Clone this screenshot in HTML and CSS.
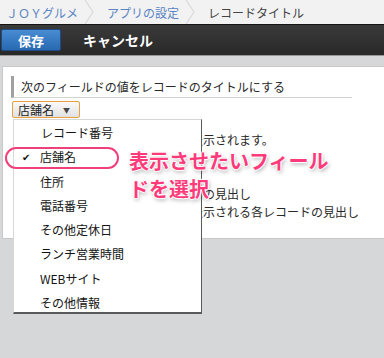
FILE: index.html
```html
<!DOCTYPE html>
<html lang="ja">

<head>
    <meta charset="UTF-8">
    <title>レコードタイトル</title>
    <link rel="stylesheet" href="styles.css">
</head>

<body>
    <nav class="crumbs">
        <a class="crumb link">ＪＯＹグルメ</a>
        <svg class="sep" width="14" height="24" viewBox="0 0 14 24"><path d="M2 0 L10 12 L2 24" fill="none" stroke="#d9d9d9" stroke-width="1.2"/></svg>
        <a class="crumb link">アプリの設定</a>
        <svg class="sep" width="14" height="24" viewBox="0 0 14 24"><path d="M2 0 L10 12 L2 24" fill="none" stroke="#d9d9d9" stroke-width="1.2"/></svg>
        <span class="crumb">レコードタイトル</span>
    </nav>

    <div class="toolbar">
        <button class="btn-save">保存</button>
        <button class="btn-cancel">キャンセル</button>
    </div>

    <main class="stage">
        <section class="panel">
            <h2 class="field-title">次のフィールドの値をレコードのタイトルにする</h2>
            <div class="picker">
                <div class="select">店舗名 <span class="caret">▼</span></div>
                <ul class="menu">
                    <li>レコード番号</li>
                    <li class="checked">店舗名</li>
                    <li>住所</li>
                    <li>電話番号</li>
                    <li>その他定休日</li>
                    <li>ランチ営業時間</li>
                    <li>WEBサイト</li>
                    <li>その他情報</li>
                </ul>
            </div>
            <div class="notes">
                <p class="line-1">タイトルは各レコードの上部に表示されます。</p>
                <p class="line-2">ブラウザのタブに表示される画面の見出し</p>
                <p class="line-3">レコード一覧やスレッドなどに表示される各レコードの見出し</p>
            </div>
        </section>

        <!-- annotation -->
        <div class="ring"></div>
        <p class="callout">表示させたいフィール<br>ドを選択</p>
    </main>
</body>

</html>
```

FILE: styles.css
```css
body {
    margin: 0;
    font-family: "Noto Sans CJK JP", "Noto Sans", sans-serif;
    font-size: 12px;
    color: rgb(51, 51, 51);
    background: rgb(214, 215, 217);
    width: 384px;
    height: 358px;
    overflow: hidden;
}

.crumbs {
    height: 24px;
    display: flex;
    align-items: center;
    background: rgb(242, 242, 242);
    padding-left: 6px;
    white-space: nowrap;
}

.crumb {
    font-size: 12px;
    color: rgb(68, 68, 68);
}

.crumb.link {
    color: rgb(90, 132, 196);
}

.sep {
    margin: 0 10px 0 5px;
}

.toolbar {
    height: 30px;
    display: flex;
    align-items: center;
    gap: 22px;
    background: linear-gradient(rgb(58, 58, 58), rgb(40, 40, 40));
    border-top: 1px solid rgb(20, 20, 20);
    border-bottom: 1px solid rgb(150, 150, 150);
    padding-left: 1px;
}

.toolbar button {
    font-family: inherit;
    font-weight: bold;
    cursor: pointer;
}

.btn-save {
    width: 60px;
    height: 22px;
    font-size: 13px;
    color: rgb(255, 255, 255);
    background: linear-gradient(rgb(72, 140, 210), rgb(40, 105, 178));
    border: 1px solid rgb(30, 75, 135);
    border-radius: 2px;
    padding: 0;
}

.btn-cancel {
    font-size: 14px;
    color: rgb(255, 255, 255);
    background: none;
    border: none;
    padding: 0;
}

.stage {
    position: relative;
    padding: 10px 0 0 2px;
}

.panel {
    background: rgb(255, 255, 255);
    border: 1px solid rgb(200, 200, 200);
    border-right: none;
    padding: 9px 0 0 8px;
    box-sizing: border-box;
    height: 173px;
}

.field-title {
    width: 331px;
    margin: 0;
    font-size: 12px;
    font-weight: normal;
    line-height: 21px;
    color: rgb(40, 40, 40);
    border-left: 3px solid rgb(160, 160, 160);
    border-bottom: 1px solid rgb(210, 210, 210);
    padding-left: 7px;
}

.picker {
    position: relative;
    margin-top: 3px;
}

.select {
    display: inline-flex;
    align-items: center;
    gap: 9px;
    width: 68px;
    height: 17px;
    box-sizing: border-box;
    padding-left: 5px;
    font-size: 12px;
    color: rgb(34, 34, 34);
    background: linear-gradient(rgb(250, 250, 250), rgb(225, 225, 225));
    border: 1px solid rgb(232, 160, 64);
    border-radius: 2px;
    margin-left: 1px;
}

.caret {
    font-size: 7px;
    color: rgb(70, 70, 70);
}

.menu {
    position: absolute;
    left: 2px;
    top: 18px;
    z-index: 2;
    width: 189px;
    height: 195px;
    box-sizing: border-box;
    margin: 0;
    padding: 1px 0 0 0;
    list-style: none;
    background: rgb(255, 255, 255);
    border: 1px solid rgb(215, 215, 215);
    border-right-color: rgb(90, 90, 90);
    border-bottom: 2px solid rgb(90, 90, 90);
}

.menu li {
    height: 24.3px;
    line-height: 24.3px;
    padding-left: 26px;
    font-size: 12px;
    color: rgb(20, 20, 20);
    position: relative;
}

.menu li:first-child {
    padding-left: 27px;
}

.menu li.checked::before {
    content: "✔";
    position: absolute;
    left: 8px;
    font-size: 10px;
}

.notes {
    margin: 13px 0 0 12px;
    white-space: nowrap;
}

.notes p {
    margin: 0;
    font-size: 12px;
    line-height: 18px;
    color: rgb(40, 40, 40);
}

.notes .line-2 {
    margin-top: 36px;
}

.ring {
    position: absolute;
    left: 5px;
    top: 91px;
    width: 110px;
    height: 18px;
    border: 2px solid rgb(240, 64, 122);
    border-radius: 12px;
    z-index: 3;
}

.callout {
    position: absolute;
    left: 129px;
    top: 91px;
    z-index: 3;
    margin: 0;
    font-size: 20px;
    font-weight: bold;
    line-height: 28px;
    color: rgb(255, 58, 122);
    white-space: nowrap;
    text-shadow: 1px 0 0 rgb(255, 255, 255), -1px 0 0 rgb(255, 255, 255), 0 1px 0 rgb(255, 255, 255), 0 -1px 0 rgb(255, 255, 255), 0 0 3px rgb(255, 255, 255), 1px 2px 4px rgba(0, 0, 0, 0.4);
}
```
